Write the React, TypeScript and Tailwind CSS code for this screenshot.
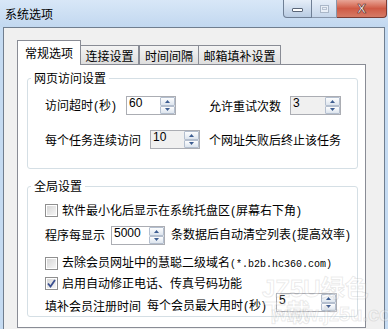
import React from "react";

const FONT = "font-['Noto_Sans_CJK_SC','Liberation_Sans',sans-serif]";

function P({ children }: { children: React.ReactNode }) {
  return <span className="inline-block w-[6px] text-center font-['Liberation_Sans',sans-serif]">{children}</span>;
}

function Arrow({ up }: { up?: boolean }) {
  return (
    <svg width="5" height="3" viewBox="0 0 5 3">
      <path d={up ? "M0 3 L2.5 0 L5 3Z" : "M0 0 L2.5 3 L5 0Z"} fill="#3d5d91" />
    </svg>
  );
}

function Spin() {
  return (
    <div className="flex flex-col w-[15px]">
      <div className="flex-1 border border-[#b4bfcf] rounded-[1px] bg-gradient-to-b from-[#fdfdfe] to-[#dde5ee] flex items-center justify-center">
        <Arrow up />
      </div>
      <div className="flex-1 border border-[#b4bfcf] rounded-[1px] bg-gradient-to-b from-[#fdfdfe] to-[#dde5ee] flex items-center justify-center">
        <Arrow />
      </div>
    </div>
  );
}

function NumBox({ value, w, disabled }: { value: string; w: string; disabled?: boolean }) {
  return (
    <div className={`flex h-[19px] ${w} border border-[#abadb3] ${disabled ? "bg-[#f0f0f0]" : "bg-white"} shrink-0`}>
      <div className="flex-1 pl-[2px] text-[12px] leading-[13px] font-['Liberation_Sans',sans-serif] text-black">{value}</div>
      <Spin />
    </div>
  );
}

function Check({ checked }: { checked?: boolean }) {
  return (
    <div className="w-[13px] h-[13px] border border-[#8f8f8f] bg-white p-px shrink-0">
      <div className="w-full h-full bg-gradient-to-br from-[#d6d6d6] to-[#f6f6f6] flex items-center justify-center">
        {checked && (
          <svg width="9" height="9" viewBox="0 0 9 9">
            <path d="M1 4.5 L3.5 7.5 L8 1" stroke="#3a4f8f" strokeWidth="1.8" fill="none" />
          </svg>
        )}
      </div>
    </div>
  );
}

export default function App() {
  return (
    <div className={`relative w-[388px] h-[329px] overflow-hidden bg-[#c5dbf2] flex flex-col ${FONT} text-[12px] leading-[14px] text-black`}>
      {/* title bar */}
      <div className="h-[27px] flex justify-between items-start bg-gradient-to-b from-[#d8e7f7] to-[#c2d8f0] shrink-0">
        <div className="pl-[5px] pt-[7px] text-[12px] leading-[14px]">系统选项</div>
        <div className="flex mr-[1px]">
          <div className="w-[29px] h-[18px] border border-t-0 border-[#6f7f95] rounded-bl-[4px] bg-gradient-to-b from-[#e6eef8] to-[#b9cce3] flex items-center justify-center">
            <div className="w-[11px] h-[4px] mt-[3px] bg-white border border-[#5a6678] rounded-[1px]" />
          </div>
          <div className="w-[25px] h-[18px] border border-t-0 border-l-0 border-[#8796ab] bg-gradient-to-b from-[#e6eef8] to-[#c6d6ea] flex items-center justify-center">
            <div className="w-[9px] h-[8px] border border-[#aab7c8] bg-[#e9eff7] flex items-center justify-center">
              <div className="w-[5px] h-[3px] border border-[#b8c3d2]" />
            </div>
          </div>
          <div className="w-[50px] h-[18px] border border-t-0 border-l-0 border-[#7a3b33] rounded-br-[4px] bg-gradient-to-b from-[#e8a596] via-[#cf5a45] to-[#d57a66] flex items-center justify-center">
            <span className="text-white text-[13px] leading-[14px] font-bold font-['Liberation_Sans',sans-serif] [-webkit-text-stroke:0.6px_#5a2a24]">X</span>
          </div>
        </div>
      </div>
      {/* client */}
      <div className="flex-1 mx-[3px] border border-b-0 border-[#707e8f] bg-[#f0f0f0] pl-[13px] pt-[12px]">
        {/* tabs */}
        <div className="relative z-10 -mb-px flex items-end">
          <div className="w-[64px] h-[25px] border border-b-0 border-[#898c95] bg-white flex items-center justify-center">常规选项</div>
          <div className="w-[58px] h-[19px] mb-px border border-b-0 border-l-0 border-[#898c95] bg-gradient-to-b from-[#f4f4f4] to-[#dedede] flex items-center justify-center pt-[1px]">连接设置</div>
          <div className="w-[60px] h-[19px] mb-px border border-b-0 border-[#898c95] bg-gradient-to-b from-[#f4f4f4] to-[#dedede] flex items-center justify-center pt-[1px]">时间间隔</div>
          <div className="w-[82px] h-[19px] mb-px border border-b-0 border-l-0 border-[#898c95] bg-gradient-to-b from-[#f4f4f4] to-[#dedede] flex items-center justify-center pt-[1px]">邮箱填补设置</div>
        </div>
        {/* panel */}
        <div className="w-[349px] h-[264px] border border-[#898c95] bg-white pt-[6px]">
          <fieldset className="ml-[9px] w-[331px] border border-[#d5dfe5] rounded-[3px] pt-[11px] pb-[19px] pl-[17px]">
            <legend className="-ml-[14px] px-[3px] leading-[14px]">网页访问设置</legend>
            <div className="flex items-center h-[19px]">
              <span>访问超时<P>(</P>秒<P>)</P></span>
              <div className="ml-[9px]"><NumBox value="60" w="w-[50px]" /></div>
              <span className="ml-[33px]">允许重试次数</span>
              <div className="ml-[9px]"><NumBox value="3" w="w-[51px]" disabled /></div>
            </div>
            <div className="flex items-center h-[19px] mt-[15px]">
              <span>每个任务连续访问</span>
              <div className="ml-[9px]"><NumBox value="10" w="w-[50px]" disabled /></div>
              <span className="ml-[9px]">个网址失败后终止该任务</span>
            </div>
          </fieldset>
          <fieldset className="mt-[10px] ml-[9px] w-[331px] border border-[#d5dfe5] rounded-[3px] pt-[9px] pb-[4px] pl-[17px]">
            <legend className="-ml-[14px] px-[3px] leading-[14px]">全局设置</legend>
            <div className="flex items-center h-[16px]">
              <Check />
              <span className="ml-[4px]">软件最小化后显示在系统托盘区<P>(</P>屏幕右下角<P>)</P></span>
            </div>
            <div className="flex items-center h-[19px] mt-[8px]">
              <span className="mb-[2px]">程序每显示</span>
              <div className="ml-[6px]"><NumBox value="5000" w="w-[54px]" /></div>
              <span className="ml-[6px] mb-[2px]">条数据后自动清空列表<P>(</P>提高效率<P>)</P></span>
            </div>
            <div className="flex items-center h-[16px] mt-[10px]">
              <Check />
              <span className="ml-[4px]">
                去除会员网址中的慧聪二级域名
                <span className="font-['Liberation_Mono',monospace] text-[10px]">(*.b2b.hc360.com)</span>
              </span>
            </div>
            <div className="flex items-center h-[16px] mt-[4px]">
              <Check checked />
              <span className="ml-[4px]">启用自动修正电话、传真号码功能</span>
            </div>
            <div className="flex items-end mt-[2px]">
              <span className="mb-[-1px]">填补会员注册时间</span>
              <span className="ml-[6px] mb-[-1px]">每个会员最大用时<P>(</P>秒<P>)</P></span>
              <div className="ml-[9px]"><NumBox value="5" w="w-[61px]" /></div>
            </div>
          </fieldset>
        </div>
      </div>
      {/* watermark */}
      <div className="absolute left-[262px] top-[277px] pointer-events-none text-[24px] leading-[24px] font-bold text-white/25 [-webkit-text-stroke:1px_rgba(150,150,150,0.2)] font-['Liberation_Sans','Noto_Sans_CJK_SC',sans-serif]">JZ5U绿色下载</div>
      <div className="absolute left-[272px] top-[304px] pointer-events-none text-[20px] leading-[20px] font-bold text-white/25 [-webkit-text-stroke:1px_rgba(150,150,150,0.2)] font-['Liberation_Sans',sans-serif]">www.jz5u.com</div>
    </div>
  );
}
